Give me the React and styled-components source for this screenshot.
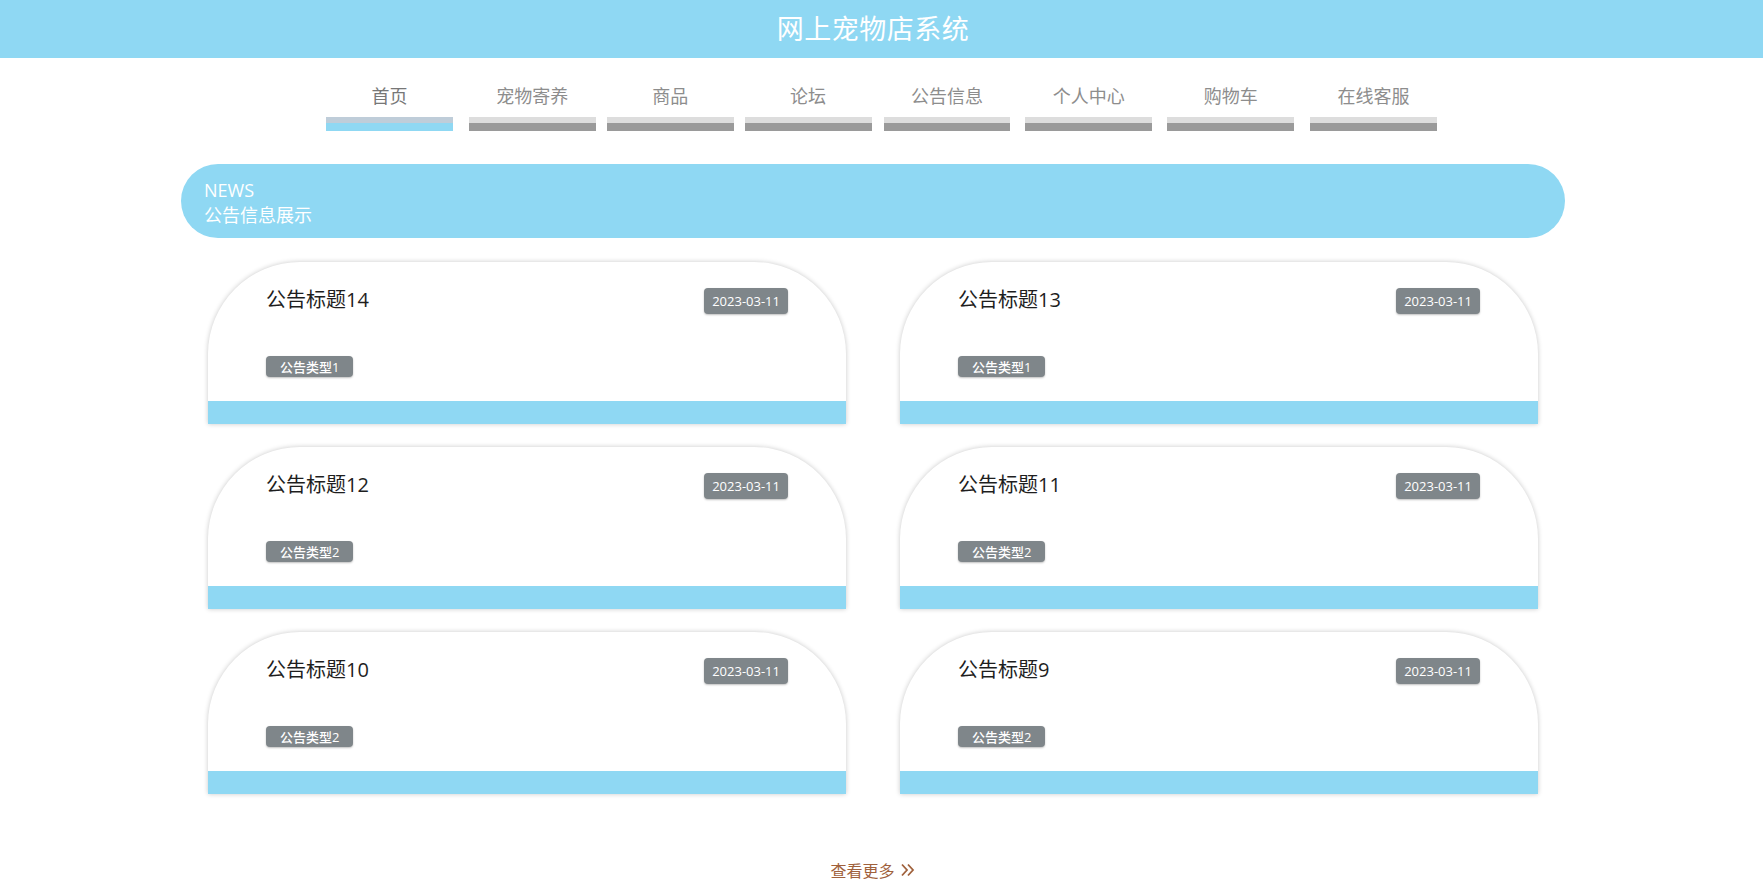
import styled, { createGlobalStyle } from "styled-components";

const GlobalStyle = createGlobalStyle`
  html, body {
    margin: 0;
    padding: 0;
    overflow: hidden;
    background: #fff;
    font-family: "Open Sans", "Noto Sans CJK SC", sans-serif;
  }
`;

const Header = styled.header`
  height: 58px;
  background: #8fd8f3;
  display: flex;
  align-items: center;
  justify-content: center;
  padding: 0 17px 4px 0;
  box-sizing: border-box;
`;

const SiteTitle = styled.h1`
  margin: 0;
  color: #fff;
  font-size: 27px;
  font-weight: 400;
  letter-spacing: 0.5px;
`;

const Nav = styled.nav`
  width: 1111px;
  margin: 0 auto;
  padding-top: 25px;
  display: flex;
`;

const NavItem = styled.a`
  width: 127px;
  margin-left: ${(p) => p.$gap}px;
  display: flex;
  flex-direction: column;
  align-items: center;
  gap: 8px;
  color: ${(p) => (p.$active ? "#777" : "#8d8d8d")};
  font-size: 18px;
  line-height: 26px;
  cursor: pointer;
`;

const NavBar = styled.span`
  width: 100%;
  height: 6px;
  background: ${(p) => (p.$active ? "#bfcdd9" : "#dddddd")};
  border-bottom: 8px solid ${(p) => (p.$active ? "#8fd8f3" : "#9a9a9a")};
`;

const Main = styled.main`
  width: 1384px;
  margin: 33px 0 0 181px;
`;

const NewsBanner = styled.div`
  height: 74px;
  box-sizing: border-box;
  border-radius: 37px;
  background: #8fd8f3;
  padding: 14px 23px 0;
  color: #fff;
`;

const NewsEn = styled.div`
  font-size: 18px;
  line-height: 24px;
`;

const NewsCn = styled.div`
  font-size: 18px;
  line-height: 26px;
`;

const CardGrid = styled.div`
  margin: 24px 27px 0;
  display: grid;
  grid-template-columns: 1fr 1fr;
  column-gap: 54px;
  row-gap: 23px;
`;

const Card = styled.div`
  height: 162px;
  box-sizing: border-box;
  background: #fff;
  border-radius: 92px 92px 0 0;
  box-shadow: 0 0 5px rgba(0, 0, 0, 0.22);
  display: flex;
  flex-direction: column;
  overflow: hidden;
`;

const CardBody = styled.div`
  flex: 1;
  padding: 26px 58px 0;
`;

const CardHead = styled.div`
  height: 26px;
  display: flex;
  align-items: center;
  justify-content: space-between;
`;

const CardTitle = styled.div`
  font-size: 20px;
  line-height: 26px;
  padding-bottom: 2px;
  color: #1e1e1e;
`;

const Badge = styled.span`
  display: inline-flex;
  align-items: center;
  justify-content: center;
  box-sizing: border-box;
  background: #7f868a;
  color: #fff;
  border-radius: 4px;
  box-shadow: 0 1px 2px rgba(0, 0, 0, 0.25);
  font-size: 13px;
  font-weight: ${(p) => (p.$small ? 500 : 400)};
  height: ${(p) => (p.$small ? "21px" : "26px")};
  padding: 0 ${(p) => (p.$small ? "14px" : "8px")};
`;

const TypeRow = styled.div`
  margin-top: 41px;
`;

const CardFoot = styled.div`
  height: 23px;
  background: #8fd8f3;
`;

const More = styled.a`
  margin: 64px auto 0;
  display: flex;
  align-items: center;
  justify-content: center;
  gap: 5px;
  color: #a0613c;
  font-size: 16px;
  cursor: pointer;
`;

const navItems = [
  { label: "首页", gap: 0 },
  { label: "宠物寄养", gap: 16 },
  { label: "商品", gap: 11 },
  { label: "论坛", gap: 11 },
  { label: "公告信息", gap: 12 },
  { label: "个人中心", gap: 15 },
  { label: "购物车", gap: 15 },
  { label: "在线客服", gap: 16 },
];

const notices = [
  { title: "公告标题14", type: "公告类型1" },
  { title: "公告标题13", type: "公告类型1" },
  { title: "公告标题12", type: "公告类型2" },
  { title: "公告标题11", type: "公告类型2" },
  { title: "公告标题10", type: "公告类型2" },
  { title: "公告标题9", type: "公告类型2" },
];

function DoubleChevron() {
  return (
    <svg width="16" height="16" viewBox="0 0 16 16" fill="none" stroke="#a0613c" strokeWidth="1.8">
      <polyline points="2,2.5 7,8 2,13.5" />
      <polyline points="8,2.5 13,8 8,13.5" />
    </svg>
  );
}

export default function App() {
  return (
    <>
      <GlobalStyle />
      <Header>
        <SiteTitle>网上宠物店系统</SiteTitle>
      </Header>

      <Nav>
        {navItems.map((item, i) => (
          <NavItem key={item.label} $active={i === 0} $gap={item.gap}>
            {item.label}
            <NavBar $active={i === 0} />
          </NavItem>
        ))}
      </Nav>

      <Main>
        <NewsBanner>
          <NewsEn>NEWS</NewsEn>
          <NewsCn>公告信息展示</NewsCn>
        </NewsBanner>

        <CardGrid>
          {notices.map((n) => (
            <Card key={n.title}>
              <CardBody>
                <CardHead>
                  <CardTitle>{n.title}</CardTitle>
                  <Badge>2023-03-11</Badge>
                </CardHead>
                <TypeRow>
                  <Badge $small>{n.type}</Badge>
                </TypeRow>
              </CardBody>
              <CardFoot />
            </Card>
          ))}
        </CardGrid>

        <More>
          查看更多
          <DoubleChevron />
        </More>
      </Main>
    </>
  );
}
